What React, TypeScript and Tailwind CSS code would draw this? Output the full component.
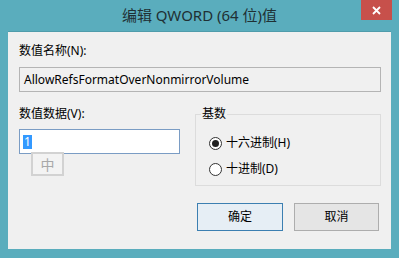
const font = { fontFamily: '"Noto Sans", "Noto Sans CJK SC", sans-serif' };

function Radio({ checked, label }: { checked?: boolean; label: string }) {
  return (
    <div className="flex items-center gap-[4px] h-[16px]">
      <span className="w-[13px] h-[13px] rounded-full border border-[#333] bg-white flex items-center justify-center">
        {checked && <span className="w-[7px] h-[7px] rounded-full bg-[#222]" />}
      </span>
      <span className="text-[12px] leading-[16px] text-black">{label}</span>
    </div>
  );
}

export default function App() {
  return (
    <div className="w-[399px] h-[258px] bg-[#5aadbd] flex flex-col" style={font}>
      {/* title bar */}
      <div className="relative h-[31px] flex items-center justify-center">
        <span className="text-[15px] leading-[20px] text-[#1f3034] -mt-[1px]">编辑 QWORD (64 位)值</span>
        <button className="absolute right-[7px] top-0 w-[31px] h-[20px] bg-[#c7504b] flex items-center justify-center">
          <svg width="9" height="9" viewBox="0 0 9 9">
            <path d="M1 1 L8 8 M8 1 L1 8" stroke="white" strokeWidth="1.8" />
          </svg>
        </button>
      </div>

      {/* client area */}
      <div className="mx-[8px] mb-[9px] flex-1 bg-[#f0f0f0] border-t border-[#4f9cab] flex flex-col pl-[11px] pr-[10px] pt-[11px]">
        <div className="text-[12px] leading-[16px] text-black">数值名称(N):</div>
        <div className="mt-[8px] h-[25px] border border-[#b4b4b4] bg-[#f0f0f0] flex items-center px-[4px] text-[12px] text-black">
          AllowRefsFormatOverNonmirrorVolume
        </div>

        <div className="mt-[14px] flex gap-[15px]">
          <div className="w-[161px] relative">
            <div className="text-[12px] leading-[16px] text-black">数值数据(V):</div>
            <div className="mt-[7px] h-[25px] border border-[#7a9cc4] bg-white flex items-center pl-[3px]">
              <span className="bg-[#3399ff] text-white text-[12px] leading-[14px] px-[1px]">1</span>
            </div>
            <div className="absolute left-[12px] top-[46px] w-[33px] h-[24px] border-2 border-[#d2d2d2] bg-[#f3f3f3] flex items-center justify-center text-[14px] text-[#a8a8a8]">
              中
            </div>
          </div>

          <div className="w-[186px] relative pt-[8px]">
            <div className="h-[72px] border border-[#dcdcdc] flex flex-col gap-[10px] pl-[13px] pt-[20px]">
              <Radio checked label="十六进制(H)" />
              <Radio label="十进制(D)" />
            </div>
            <span className="absolute left-[6px] top-0 bg-[#f0f0f0] px-[1px] text-[12px] leading-[16px] text-black">基数</span>
          </div>
        </div>

        <div className="mt-[17px] flex justify-end gap-[11px] mr-[2px]">
          <button className="w-[86px] h-[28px] border border-[#3c7fb1] bg-[#e6eef5] text-[12px] text-black">确定</button>
          <button className="w-[85px] h-[28px] border border-[#adadad] bg-[#e5e5e5] text-[12px] text-black">取消</button>
        </div>
      </div>
    </div>
  );
}
